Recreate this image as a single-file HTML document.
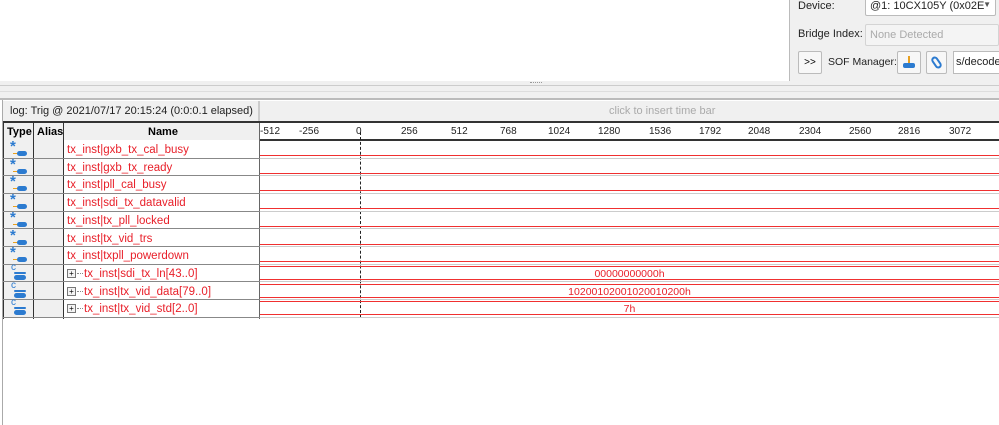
<!DOCTYPE html><html><head><style>
*{margin:0;padding:0;box-sizing:border-box}
body{width:999px;height:425px;background:#fff;position:relative;overflow:hidden;font-family:"Liberation Sans",sans-serif;font-size:11px}
.a{position:absolute}
.r{color:#e8202a}
.tk{position:absolute;top:126px;font-size:10px;color:#222}
</style></head><body>
<div class="a" style="left:789px;top:0;width:1px;height:81px;background:#bbb"></div>
<div class="a" style="left:790px;top:0;width:209px;height:81px;background:#f0f0f0"></div>
<div class="a" style="left:798px;top:0;font-size:11px;color:#222">Device:</div>
<div class="a" style="left:865px;top:-4px;width:131px;height:20px;background:#fff;border:1px solid #bbb;border-radius:2px;padding:3px 4px;color:#222">@1: 10CX105Y (0x02E<span style="position:absolute;right:4px;top:3px;font-size:8px;color:#555">▼</span></div>
<div class="a" style="left:798px;top:28px;color:#222">Bridge Index:</div>
<div class="a" style="left:865px;top:24px;width:134px;height:22px;background:#f4f4f4;border:1px solid #d4d4d4;border-radius:2px;padding:4px 4px;color:#aaa">None Detected</div>
<div class="a" style="left:798px;top:51px;width:24px;height:23px;border:1px solid #bbb;border-radius:2px;background:#f7f7f7;text-align:center;line-height:21px;font-size:10px">&gt;&gt;</div>
<div class="a" style="left:828px;top:56px;color:#222;font-size:10.5px;white-space:nowrap">SOF Manager:</div>
<div class="a" style="left:897px;top:51px;width:24px;height:23px;border:1px solid #bbb;border-radius:2px;background:#f7f7f7"><div class="a" style="left:10px;top:4px;width:2px;height:8px;background:#e8a020"></div><div class="a" style="left:5px;top:11px;width:12px;height:5px;background:#2c7bd0;border-radius:2px"></div></div>
<div class="a" style="left:926px;top:51px;width:21px;height:23px;border:1px solid #bbb;border-radius:2px;background:#f7f7f7"><div class="a" style="left:6px;top:4px;width:7px;height:13px;border:2px solid #2c7bd0;border-radius:4px;transform:rotate(-35deg)"></div></div>
<div class="a" style="left:953px;top:51px;width:50px;height:23px;border:1px solid #bbb;background:#fff;padding:4px 2px;color:#222">s/decoder</div>
<div class="a" style="left:0;top:81px;width:999px;height:19px;background:#f0f0f0"></div>
<div class="a" style="left:0;top:85px;width:999px;height:1px;background:#ccc"></div>
<div class="a" style="left:0;top:91px;width:999px;height:1px;background:#ddd"></div>
<div class="a" style="left:0;top:98px;width:999px;height:2px;background:#bbb"></div>
<div class="a" style="left:530px;top:82px;width:12px;height:2px;border-top:1px dotted #999"></div>
<div class="a" style="left:2px;top:100px;width:997px;height:325px;background:#fff;border-left:1px solid #aaa"></div>
<div class="a" style="left:3px;top:101px;width:996px;height:20px;background:#f0f0f0"></div>
<div class="a" style="left:258px;top:101px;width:2px;height:20px;background:#ccc"></div>
<div class="a" style="left:10px;top:105px;color:#222">log: Trig @ 2021/07/17 20:15:24 (0:0:0.1 elapsed)</div>
<div class="a" style="left:609px;top:105px;color:#aaa">click to insert time bar</div>
<div class="a" style="left:3px;top:121px;width:996px;height:2px;background:#333"></div>
<div class="a" style="left:3px;top:123px;width:257px;height:17px;background:#f0f0f0"></div>
<div class="a" style="left:7px;top:126px;font-weight:bold;font-size:11px">Type</div>
<div class="a" style="left:37px;top:126px;font-weight:bold;font-size:11px">Alias</div>
<div class="a" style="left:148px;top:126px;font-weight:bold;font-size:11px">Name</div>
<div class="a" style="left:4px;top:140px;width:59px;height:178px;background:#f0f0f0"></div>
<div class="a" style="left:33px;top:123px;width:1px;height:196px;background:#333"></div>
<div class="a" style="left:63px;top:123px;width:1px;height:196px;background:#333"></div>
<div class="a" style="left:3px;top:123px;width:1px;height:196px;background:#333"></div>
<div class="a" style="left:259px;top:123px;width:1px;height:196px;background:#666"></div>
<div class="a" style="left:260px;top:139px;width:739px;height:2px;background:#333"></div>
<div class="tk" style="left:260px">-512</div><div class="tk" style="left:299px">-256</div><div class="tk" style="left:356px">0</div>
<div class="tk" style="left:401px">256</div><div class="tk" style="left:451px">512</div><div class="tk" style="left:500px">768</div>
<div class="tk" style="left:548px">1024</div><div class="tk" style="left:598px">1280</div><div class="tk" style="left:649px">1536</div>
<div class="tk" style="left:699px">1792</div><div class="tk" style="left:748px">2048</div><div class="tk" style="left:799px">2304</div>
<div class="tk" style="left:849px">2560</div><div class="tk" style="left:898px">2816</div><div class="tk" style="left:949px">3072</div>
<div class="a" style="left:360px;top:132px;width:0;height:186px;border-left:1px dashed #222"></div>
<div id="rows"></div>
<script>
var names=["tx_inst|gxb_tx_cal_busy","tx_inst|gxb_tx_ready","tx_inst|pll_cal_busy","tx_inst|sdi_tx_datavalid","tx_inst|tx_pll_locked","tx_inst|tx_vid_trs","tx_inst|txpll_powerdown","tx_inst|sdi_tx_ln[43..0]","tx_inst|tx_vid_data[79..0]","tx_inst|tx_vid_std[2..0]"];
var vals=["","","","","","","","00000000000h","10200102001020010200h","7h"];
var h="";
for(var i=0;i<10;i++){var t=141+i*17.7;var bus=i>=7;
h+='<div class="a" style="left:3px;top:'+(t+16.5)+'px;width:257px;height:1px;background:#888"></div>';
h+='<div class="a" style="left:260px;top:'+(t+16.5)+'px;width:739px;height:1px;background:#ccc"></div>';
if(!bus){h+='<div class="a" style="left:10px;top:'+(t-3)+'px;font-size:15px;font-weight:bold;color:#2c7bd0">*</div><div class="a" style="left:13px;top:'+(t+12)+'px;width:5px;height:1px;background:#e8a020"></div><div class="a" style="left:17px;top:'+(t+10)+'px;width:10px;height:5px;border-radius:3px;background:#2c7bd0"></div>';
h+='<div class="a r" style="left:67px;top:'+(t+3)+'px;font-size:11.5px">'+names[i]+'</div>';
h+='<div class="a" style="left:260px;top:'+(t+14)+'px;width:739px;height:1px;background:#f03030"></div>';}
else{h+='<div class="a" style="left:11px;top:'+(t-3)+'px;font-size:10px;color:#2c7bd0">c</div><div class="a" style="left:14px;top:'+(t+7)+'px;width:12px;height:2px;background:#2c7bd0;border-radius:1px"></div><div class="a" style="left:14px;top:'+(t+10)+'px;width:12px;height:5px;background:#2c7bd0;border-radius:3px"></div>';
h+='<div class="a" style="left:67px;top:'+(t+4)+'px;width:9px;height:9px;border:1px solid #777;font-size:8px;line-height:7px;text-align:center;background:#f4f4f4">+</div><div class="a" style="left:77px;top:'+(t+8)+'px;width:6px;border-top:1px dotted #888"></div>';
h+='<div class="a r" style="left:84px;top:'+(t+3)+'px;font-size:11.5px">'+names[i]+'</div>';
h+='<div class="a" style="left:260px;top:'+(t+1)+'px;width:739px;height:1px;background:#f03030"></div><div class="a" style="left:260px;top:'+(t+14)+'px;width:739px;height:1px;background:#f03030"></div>';
h+='<div class="a r" style="left:260px;width:739px;text-align:center;top:'+(t+3)+'px;font-size:10.5px">'+vals[i]+'</div>';}
}
document.getElementById("rows").innerHTML=h;
</script>
</body></html>
